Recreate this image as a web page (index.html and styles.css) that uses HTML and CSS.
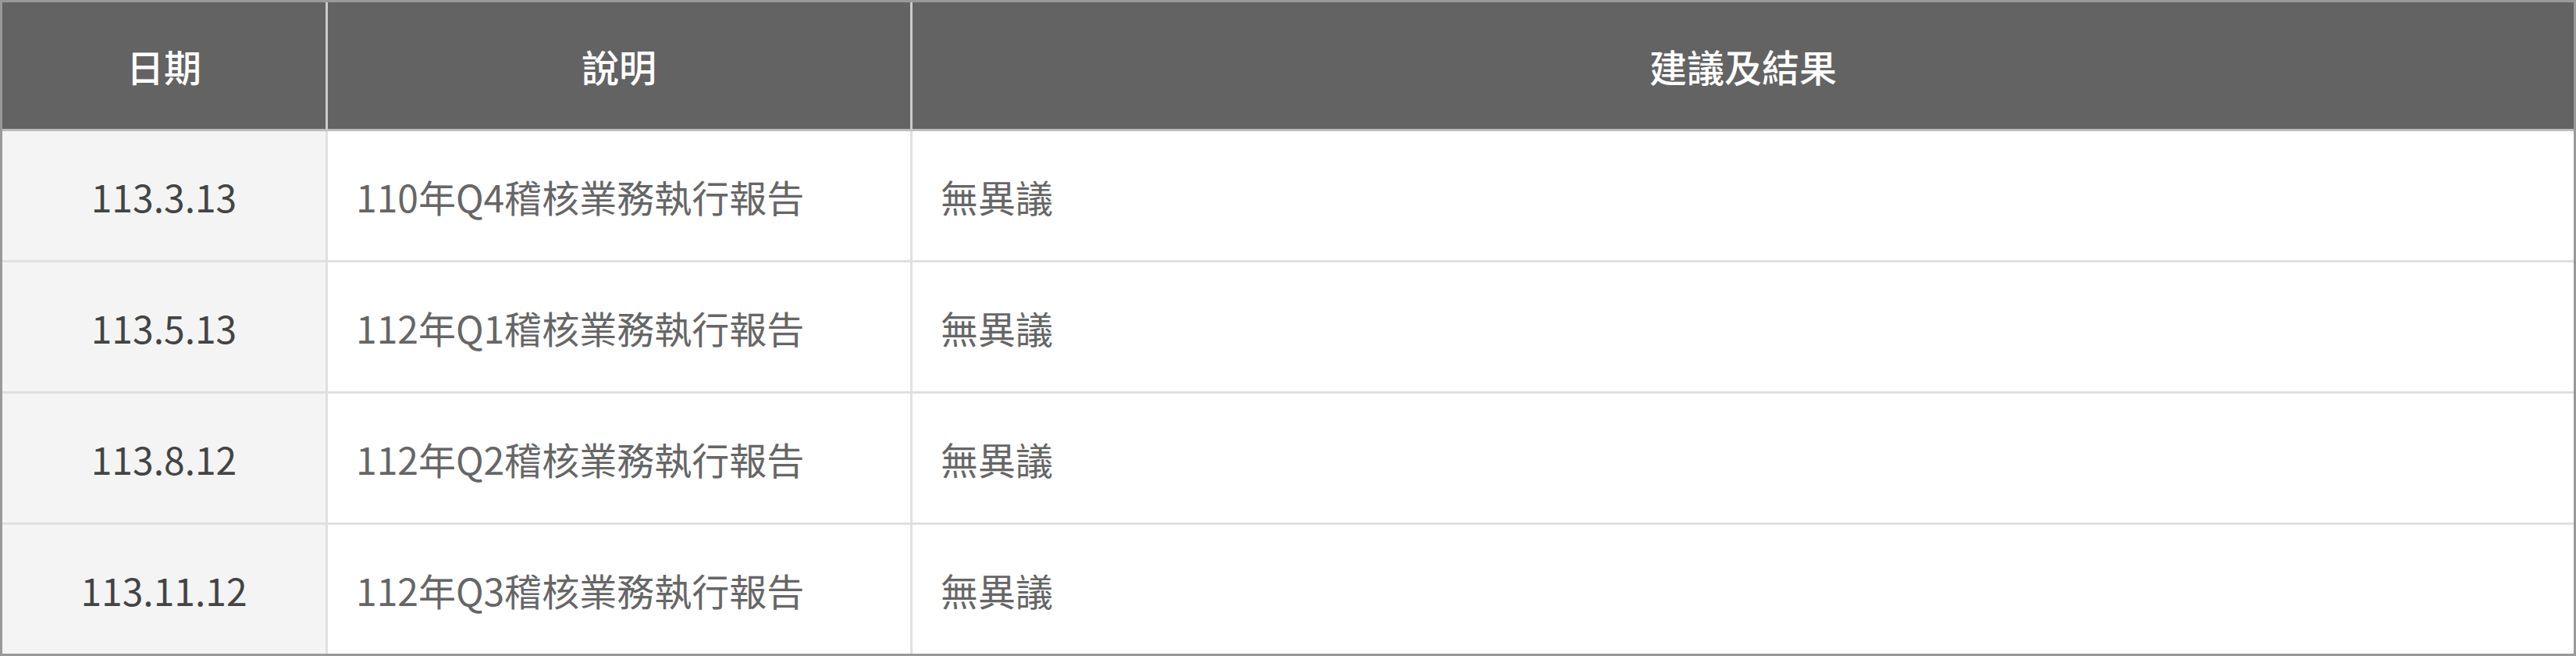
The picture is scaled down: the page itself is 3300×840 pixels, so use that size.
FILE: index.html
```html
<!DOCTYPE html>
<html lang="zh-Hant">
<head>
<meta charset="utf-8">
<title>稽核報告</title>
<link rel="stylesheet" href="styles.css">
</head>
<body>
<table class="report">
  <colgroup>
    <col class="c-date">
    <col class="c-desc">
    <col class="c-result">
  </colgroup>
  <thead>
    <tr>
      <th>日期</th>
      <th>說明</th>
      <th>建議及結果</th>
    </tr>
  </thead>
  <tbody>
    <tr>
      <td class="date">113.3.13</td>
      <td>110年Q4稽核業務執行報告</td>
      <td>無異議</td>
    </tr>
    <tr>
      <td class="date">113.5.13</td>
      <td>112年Q1稽核業務執行報告</td>
      <td>無異議</td>
    </tr>
    <tr>
      <td class="date">113.8.12</td>
      <td>112年Q2稽核業務執行報告</td>
      <td>無異議</td>
    </tr>
    <tr>
      <td class="date">113.11.12</td>
      <td>112年Q3稽核業務執行報告</td>
      <td>無異議</td>
    </tr>
  </tbody>
</table>
</body>
</html>
```
FILE: styles.css
```css
html, body {
  margin: 0;
  padding: 0;
  background: #ffffff;
}

.report {
  width: 3300px;
  height: 840px;
  border-collapse: separate;
  border-spacing: 0;
  border: 3px solid #999999;
  table-layout: fixed;
  font-family: "Noto Sans CJK TC", "Noto Sans", sans-serif;
  font-size: 48px;
  box-sizing: border-box;
}

.c-date { width: 417px; }
.c-desc { width: 749px; }
.c-result { width: auto; }

.report th {
  height: 162px;
  padding: 0;
  background: #636363;
  color: #ffffff;
  font-weight: 500;
  text-align: center;
  vertical-align: middle;
  border-bottom: 3px solid #bcbcbc;
  border-right: 3px solid #cccccc;
}

.report th:last-child {
  border-right: none;
}

.report td {
  height: 165px;
  padding: 0 36px;
  color: #666666;
  font-weight: 400;
  text-align: left;
  vertical-align: middle;
  border-bottom: 3px solid #e0e0e0;
  border-right: 3px solid #e0e0e0;
  background: #ffffff;
}

.report td:last-child {
  border-right: none;
}

.report tbody tr:last-child td {
  border-bottom: none;
}

.report td.date {
  background: #f4f4f4;
  color: #444444;
  text-align: center;
  padding: 0;
}
```
